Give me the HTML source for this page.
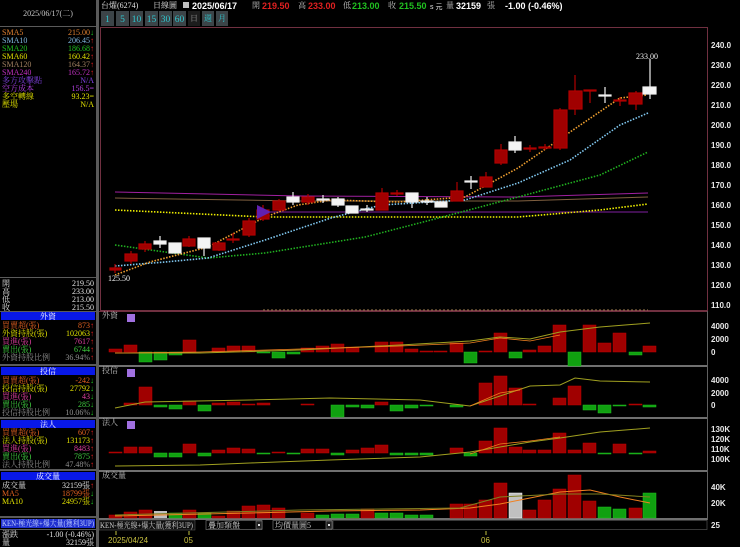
<!DOCTYPE html>
<html><head><meta charset="utf-8"><style>
html,body{margin:0;padding:0;background:#000;width:740px;height:547px;overflow:hidden}
svg{display:block}
text{font-family:"Liberation Sans","Noto Sans CJK TC",sans-serif;font-size:8px}
.s{font-family:"Liberation Serif","Noto Serif CJK SC",serif;font-size:8px}
.b{font-family:"Liberation Serif","Noto Serif CJK SC",serif;font-size:9.5px}
.ax{fill:#e8e8e8;font-size:8px;font-weight:bold}
</style></head><body>
<svg width="740" height="547" viewBox="0 0 740 547" xmlns="http://www.w3.org/2000/svg">
<rect width="740" height="547" fill="#000"/>
<rect x="96" y="0" width="3" height="547" fill="#5a5a5a"/>
<rect x="0" y="26" width="96" height="1" fill="#5a5a5a"/>
<rect x="0" y="277" width="96" height="1" fill="#5a5a5a"/>
<text x="48" y="16" class="s" fill="#c8c8c8" text-anchor="middle">2025/06/17(二)</text>
<text x="2" y="35" fill="#e08030" class="s">SMA5</text><text x="94" y="35" fill="#e08030" class="s" text-anchor="end">215.00<tspan fill="#20c020">↓</tspan></text>
<text x="2" y="43" fill="#80b8e0" class="s">SMA10</text><text x="94" y="43" fill="#80b8e0" class="s" text-anchor="end">206.45<tspan fill="#e02020">↑</tspan></text>
<text x="2" y="51" fill="#20c020" class="s">SMA20</text><text x="94" y="51" fill="#20c020" class="s" text-anchor="end">186.68<tspan fill="#e02020">↑</tspan></text>
<text x="2" y="59" fill="#e0e000" class="s">SMA60</text><text x="94" y="59" fill="#e0e000" class="s" text-anchor="end">160.42<tspan fill="#e02020">↑</tspan></text>
<text x="2" y="67" fill="#a08060" class="s">SMA120</text><text x="94" y="67" fill="#a08060" class="s" text-anchor="end">164.37<tspan fill="#e02020">↑</tspan></text>
<text x="2" y="75" fill="#c030c0" class="s">SMA240</text><text x="94" y="75" fill="#c030c0" class="s" text-anchor="end">165.72<tspan fill="#e02020">↑</tspan></text>
<text x="2" y="83" fill="#8040e0" class="s">多方攻擊點</text><text x="94" y="83" fill="#8040e0" class="s" text-anchor="end">N/A</text>
<text x="2" y="91" fill="#b040e0" class="s">空方成本</text><text x="94" y="91" fill="#b040e0" class="s" text-anchor="end">156.5=</text>
<text x="2" y="99" fill="#e0e000" class="s">多空轉線</text><text x="94" y="99" fill="#e0e000" class="s" text-anchor="end">93.23=</text>
<text x="2" y="107" fill="#e0e000" class="s">壓場</text><text x="94" y="107" fill="#e0e000" class="s" text-anchor="end">N/A</text>
<text x="2" y="286" class="s" fill="#e0e0e0">開</text><text x="94" y="286" class="s" fill="#e0e0e0" text-anchor="end">219.50</text>
<text x="2" y="294" class="s" fill="#e0e0e0">高</text><text x="94" y="294" class="s" fill="#e0e0e0" text-anchor="end">233.00</text>
<text x="2" y="302" class="s" fill="#e0e0e0">低</text><text x="94" y="302" class="s" fill="#e0e0e0" text-anchor="end">213.00</text>
<text x="2" y="310" class="s" fill="#e0e0e0">收</text><text x="94" y="310" class="s" fill="#e0e0e0" text-anchor="end">215.50</text>
<rect x="0" y="311" width="96" height="1" fill="#5a5a5a"/>
<rect x="1" y="312" width="94" height="8" fill="#0818e8"/>
<text x="48" y="319" class="s" fill="#fff" text-anchor="middle">外資</text>
<text x="2" y="328" class="s" fill="#e06020">買賣超(張)</text><text x="94" y="328" class="s" fill="#e06020" text-anchor="end">873<tspan fill="#e02020">↑</tspan></text>
<text x="2" y="336" class="s" fill="#e0e000">外資持股(張)</text><text x="94" y="336" class="s" fill="#e0e000" text-anchor="end">102063<tspan fill="#e02020">↑</tspan></text>
<text x="2" y="344" class="s" fill="#e040a0">買進(張)</text><text x="94" y="344" class="s" fill="#e040a0" text-anchor="end">7617<tspan fill="#e02020">↑</tspan></text>
<text x="2" y="352" class="s" fill="#40d040">賣出(張)</text><text x="94" y="352" class="s" fill="#40d040" text-anchor="end">6744<tspan fill="#e02020">↑</tspan></text>
<text x="2" y="360" class="s" fill="#909090">外資持股比例</text><text x="94" y="360" class="s" fill="#909090" text-anchor="end">36.94%<tspan fill="#e02020">↑</tspan></text>
<rect x="0" y="364" width="96" height="2" fill="#5a5a5a"/>
<rect x="1" y="367" width="94" height="8" fill="#0818e8"/>
<text x="48" y="374" class="s" fill="#fff" text-anchor="middle">投信</text>
<text x="2" y="383" class="s" fill="#e06020">買賣超(張)</text><text x="94" y="383" class="s" fill="#e06020" text-anchor="end">-242<tspan fill="#20c020">↓</tspan></text>
<text x="2" y="391" class="s" fill="#e0e000">投信持股(張)</text><text x="94" y="391" class="s" fill="#e0e000" text-anchor="end">27792<tspan fill="#20c020">↓</tspan></text>
<text x="2" y="399" class="s" fill="#e040a0">買進(張)</text><text x="94" y="399" class="s" fill="#e040a0" text-anchor="end">43<tspan fill="#20c020">↓</tspan></text>
<text x="2" y="407" class="s" fill="#40d040">賣出(張)</text><text x="94" y="407" class="s" fill="#40d040" text-anchor="end">285<tspan fill="#20c020">↓</tspan></text>
<text x="2" y="415" class="s" fill="#909090">投信持股比例</text><text x="94" y="415" class="s" fill="#909090" text-anchor="end">10.06%<tspan fill="#20c020">↓</tspan></text>
<rect x="0" y="417" width="96" height="2" fill="#5a5a5a"/>
<rect x="1" y="420" width="94" height="8" fill="#0818e8"/>
<text x="48" y="427" class="s" fill="#fff" text-anchor="middle">法人</text>
<text x="2" y="435" class="s" fill="#e06020">買賣超(張)</text><text x="94" y="435" class="s" fill="#e06020" text-anchor="end">607<tspan fill="#e02020">↑</tspan></text>
<text x="2" y="443" class="s" fill="#e0e000">法人持股(張)</text><text x="94" y="443" class="s" fill="#e0e000" text-anchor="end">131173<tspan fill="#e02020">↑</tspan></text>
<text x="2" y="451" class="s" fill="#e040a0">買進(張)</text><text x="94" y="451" class="s" fill="#e040a0" text-anchor="end">8483<tspan fill="#e02020">↑</tspan></text>
<text x="2" y="459" class="s" fill="#40d040">賣出(張)</text><text x="94" y="459" class="s" fill="#40d040" text-anchor="end">7875<tspan fill="#e02020">↑</tspan></text>
<text x="2" y="467" class="s" fill="#909090">法人持股比例</text><text x="94" y="467" class="s" fill="#909090" text-anchor="end">47.48%<tspan fill="#e02020">↑</tspan></text>
<rect x="0" y="469" width="96" height="2" fill="#5a5a5a"/>
<rect x="1" y="472" width="94" height="8" fill="#0818e8"/>
<text x="48" y="479" class="s" fill="#fff" text-anchor="middle">成交量</text>
<text x="2" y="488" class="s" fill="#e0e0e0">成交量</text><text x="94" y="488" class="s" fill="#e0e0e0" text-anchor="end">32159張<tspan fill="#e02020">↑</tspan></text>
<text x="2" y="496" class="s" fill="#e06020">MA5</text><text x="94" y="496" class="s" fill="#e06020" text-anchor="end">18799張<tspan fill="#20c020">↓</tspan></text>
<text x="2" y="504" class="s" fill="#e0e000">MA10</text><text x="94" y="504" class="s" fill="#e0e000" text-anchor="end">24957張<tspan fill="#20c020">↓</tspan></text>
<rect x="0" y="516" width="96" height="2" fill="#5a5a5a"/>
<rect x="1" y="519" width="94" height="9" fill="#2030d0"/>
<text x="2" y="526" class="s" fill="#c0d0ff" textLength="92" lengthAdjust="spacingAndGlyphs">KEN-極光線+爆大量(獲利3UP)</text>
<rect x="0" y="529" width="96" height="1" fill="#5a5a5a"/>
<text x="2" y="537" class="s" fill="#e0e0e0">漲跌</text><text x="94" y="537" class="s" fill="#e0e0e0" text-anchor="end">-1.00 (-0.46%)</text>
<text x="2" y="545" class="s" fill="#e0e0e0">量</text><text x="94" y="545" class="s" fill="#e0e0e0" text-anchor="end">32159張</text>

<text x="101" y="8" class="s" fill="#e0e0e0">台燿(6274)</text>
<text x="153" y="8" class="s" fill="#e0e0e0">日線圖</text>
<rect x="183" y="2" width="6" height="6" fill="#c0c0c0"/>
<text x="192" y="9" fill="#fff" font-weight="bold" style="font-size:9px">2025/06/17</text>
<text x="252" y="8" class="s" fill="#c0c0c0">開</text>
<text x="262" y="9" fill="#e02020" font-weight="bold" style="font-size:9px">219.50</text>
<text x="298" y="8" class="s" fill="#c0c0c0">高</text>
<text x="308" y="9" fill="#e02020" font-weight="bold" style="font-size:9px">233.00</text>
<text x="343" y="8" class="s" fill="#c0c0c0">低</text>
<text x="352" y="9" fill="#20c020" font-weight="bold" style="font-size:9px">213.00</text>
<text x="388" y="8" class="s" fill="#c0c0c0">收</text>
<text x="399" y="9" fill="#20c020" font-weight="bold" style="font-size:9px">215.50</text>
<text x="430" y="9" fill="#e0e0e0" style="font-size:7px">s 元</text>
<text x="446" y="8" class="s" fill="#c0c0c0">量</text>
<text x="456" y="9" fill="#fff" font-weight="bold" style="font-size:9px">32159</text>
<text x="487" y="8" class="s" fill="#c0c0c0">張</text>
<text x="505" y="9" fill="#fff" font-weight="bold" style="font-size:9px">-1.00 (-0.46%)</text>
<rect x="101" y="11" width="13" height="15" fill="#3c4448"/><text x="107.5" y="22" fill="#30c8d0" text-anchor="middle" class="b">1</text>
<rect x="116" y="11" width="13" height="15" fill="#3c4448"/><text x="122.5" y="22" fill="#30c8d0" text-anchor="middle" class="b">5</text>
<rect x="130" y="11" width="13" height="15" fill="#3c4448"/><text x="136.5" y="22" fill="#30c8d0" text-anchor="middle" class="b">10</text>
<rect x="145" y="11" width="13" height="15" fill="#3c4448"/><text x="151.5" y="22" fill="#30c8d0" text-anchor="middle" class="b">15</text>
<rect x="159" y="11" width="13" height="15" fill="#3c4448"/><text x="165.5" y="22" fill="#30c8d0" text-anchor="middle" class="b">30</text>
<rect x="173" y="11" width="13" height="15" fill="#3c4448"/><text x="179.5" y="22" fill="#30c8d0" text-anchor="middle" class="b">60</text>
<rect x="188" y="11" width="12" height="15" fill="#1c1c1c"/><text x="194" y="21" fill="#909090" text-anchor="middle" class="s">日</text>
<rect x="202" y="11" width="12" height="15" fill="#3c4448"/><text x="208" y="21" fill="#30c8d0" text-anchor="middle" class="s">週</text>
<rect x="216" y="11" width="12" height="15" fill="#3c4448"/><text x="222" y="21" fill="#30c8d0" text-anchor="middle" class="s">月</text>
<rect x="100.5" y="27.5" width="607" height="283" fill="none" stroke="#703040" stroke-width="1"/>
<text x="711" y="48" class="ax">240.0</text><text x="711" y="68" class="ax">230.0</text><text x="711" y="88" class="ax">220.0</text><text x="711" y="108" class="ax">210.0</text><text x="711" y="128" class="ax">200.0</text><text x="711" y="148" class="ax">190.0</text><text x="711" y="168" class="ax">180.0</text><text x="711" y="188" class="ax">170.0</text><text x="711" y="208" class="ax">160.0</text><text x="711" y="228" class="ax">150.0</text><text x="711" y="248" class="ax">140.0</text><text x="711" y="268" class="ax">130.0</text><text x="711" y="288" class="ax">120.0</text><text x="711" y="308" class="ax">110.0</text>
<text x="711" y="329" class="ax">4000</text><text x="711" y="342" class="ax">2000</text><text x="711" y="355" class="ax">0</text>
<text x="711" y="383" class="ax">4000</text><text x="711" y="396" class="ax">2000</text><text x="711" y="408" class="ax">0</text>
<text x="711" y="432" class="ax">130K</text><text x="711" y="442" class="ax">120K</text><text x="711" y="452" class="ax">110K</text><text x="711" y="462" class="ax">100K</text>
<text x="711" y="490" class="ax">40K</text><text x="711" y="506" class="ax">20K</text><text x="711" y="528" class="ax">25</text>
<polyline points="115,192 300,196 518,197 648,193" fill="none" stroke="#a020a0" stroke-width="1"/>
<polyline points="115,198 300,201 518,201 648,197" fill="none" stroke="#806040" stroke-width="1"/>
<polyline points="263,212 648,212" fill="none" stroke="#8020a0" stroke-width="1"/>
<polyline points="115,210 265,217 518,217 600,210 648,204" fill="none" stroke="#f0f000" stroke-width="1.6" stroke-dasharray="1.5,1.5"/>
<polyline points="115,245 208,258 265,253 365,237 431,220 518,197 600,175 648,152" fill="none" stroke="#20b020" stroke-width="1.6" stroke-dasharray="1.5,1.5"/>
<polyline points="115,266 165,262 208,258 265,240 331,218 381,205 465,200 518,183 570,160 620,125 648,113" fill="none" stroke="#80c8f0" stroke-width="1.6" stroke-dasharray="1.5,1.5"/>
<polyline points="115,275 150,262 208,247 265,217 298,205 331,200 398,202 465,197 518,168 573,130 620,98 647,95" fill="none" stroke="#f0a030" stroke-width="1.6" stroke-dasharray="1.5,1.5"/>
<polyline points="263,310 648,310" fill="none" stroke="#a08050" stroke-width="1" stroke-dasharray="2,2"/>
<g stroke-width="1.2">
<g stroke="#b00000" fill="#a00000">
<line x1="115" y1="264" x2="115" y2="273"/><rect x="110" y="268" width="11" height="2"/>
<line x1="131" y1="251" x2="131" y2="264"/><rect x="125" y="254" width="12" height="7"/>
<line x1="145" y1="241" x2="145" y2="252"/><rect x="139" y="244" width="12" height="5"/>
<line x1="189" y1="236" x2="189" y2="247"/><rect x="183" y="239" width="12" height="7"/>
<line x1="219" y1="241" x2="219" y2="251"/><rect x="213" y="243" width="12" height="7"/>
<line x1="233" y1="233" x2="233" y2="243"/><rect x="227" y="239" width="12" height="1"/>
<line x1="249" y1="218" x2="249" y2="237"/><rect x="243" y="221" width="12" height="14"/>
<line x1="263" y1="205" x2="263" y2="221"/><rect x="257" y="210" width="12" height="9"/>
<line x1="279" y1="199" x2="279" y2="211"/><rect x="273" y="201" width="12" height="9"/>
<line x1="308" y1="194" x2="308" y2="205"/><rect x="302" y="197" width="12" height="5"/>
<line x1="382" y1="188" x2="382" y2="210"/><rect x="376" y="193" width="12" height="17"/>
<line x1="397" y1="190" x2="397" y2="196"/><rect x="391" y="193" width="12" height="1"/>
<line x1="457" y1="182" x2="457" y2="201"/><rect x="451" y="191" width="12" height="10"/>
<line x1="486" y1="172" x2="486" y2="187"/><rect x="480" y="177" width="12" height="10"/>
<line x1="501" y1="144" x2="501" y2="165"/><rect x="495" y="150" width="12" height="13"/>
<line x1="530" y1="145" x2="530" y2="152"/><rect x="524" y="148" width="12" height="1"/>
<line x1="545" y1="144" x2="545" y2="150"/><rect x="539" y="147" width="12" height="1"/>
<line x1="560" y1="108" x2="560" y2="150"/><rect x="554" y="110" width="13" height="38"/>
<line x1="575" y1="75" x2="575" y2="115"/><rect x="569" y="91" width="13" height="18"/>
<line x1="590" y1="90" x2="590" y2="103"/><rect x="584" y="90" width="12" height="1"/>
<line x1="620" y1="97" x2="620" y2="106"/><rect x="614" y="100" width="12" height="1"/>
<line x1="636" y1="91" x2="636" y2="110"/><rect x="629" y="93" width="13" height="11"/>
</g>
<g stroke="#f0f0f0" fill="#f4f4f4">
<line x1="160" y1="236" x2="160" y2="248"/><rect x="154" y="241" width="12" height="3"/>
<line x1="175" y1="243" x2="175" y2="253"/><rect x="169" y="243" width="12" height="10"/>
<line x1="204" y1="238" x2="204" y2="256"/><rect x="198" y="238" width="12" height="10"/>
<line x1="293" y1="192" x2="293" y2="205"/><rect x="287" y="197" width="12" height="5"/>
<line x1="323" y1="195" x2="323" y2="203"/><rect x="317" y="199" width="12" height="1"/>
<line x1="338" y1="197" x2="338" y2="207"/><rect x="332" y="199" width="12" height="6"/>
<rect x="346" y="206" width="12" height="7"/>
<line x1="367" y1="205" x2="367" y2="212"/><rect x="361" y="209" width="12" height="1"/>
<line x1="412" y1="193" x2="412" y2="208"/><rect x="406" y="193" width="12" height="9"/>
<line x1="427" y1="197" x2="427" y2="205"/><rect x="421" y="201" width="12" height="1"/>
<rect x="435" y="202" width="12" height="5"/>
<line x1="471" y1="176" x2="471" y2="189"/><rect x="465" y="181" width="12" height="1"/>
<line x1="515" y1="136" x2="515" y2="153"/><rect x="509" y="142" width="12" height="8"/>
<line x1="605" y1="87" x2="605" y2="103"/><rect x="599" y="95" width="12" height="1"/>
<line x1="650" y1="59" x2="650" y2="99"/><rect x="643" y="87" width="13" height="7"/>
</g>
</g>
<polygon points="257,205 271,212 257,219" fill="#6020b0"/>
<text x="108" y="281" class="s" fill="#f0f0f0">125.50</text>
<text x="636" y="59" class="s" fill="#f0f0f0">233.00</text>
<rect x="99" y="311" width="609" height="1" fill="#703040"/>
<rect x="99" y="365" width="609" height="2" fill="#707070"/>
<rect x="99" y="417" width="609" height="2" fill="#707070"/>
<rect x="99" y="470" width="609" height="2" fill="#707070"/>
<rect x="99" y="518" width="609" height="2" fill="#707070"/>
<rect x="707" y="311" width="1" height="220" fill="#606060"/>
<text x="102" y="318" class="s" fill="#c0c0c0">外資</text><rect x="127" y="314" width="8" height="8" fill="#a070e0"/>
<text x="102" y="373" class="s" fill="#c0c0c0">投信</text><rect x="127" y="369" width="8" height="8" fill="#a070e0"/>
<text x="102" y="425" class="s" fill="#c0c0c0">法人</text><rect x="127" y="421" width="8" height="8" fill="#a070e0"/>
<text x="102" y="478" class="s" fill="#c0c0c0">成交量</text>
<g fill="#a00000" stroke="#c00000" stroke-width="0.5">
<rect x="109" y="349" width="13" height="3"/><rect x="124" y="345" width="13" height="7"/><rect x="183" y="340" width="13" height="12"/><rect x="212" y="348" width="13" height="4"/><rect x="227" y="346" width="13" height="6"/><rect x="242" y="346" width="13" height="6"/><rect x="301" y="348" width="13" height="4"/><rect x="316" y="346" width="13" height="6"/><rect x="331" y="344" width="13" height="8"/><rect x="346" y="347" width="13" height="5"/><rect x="375" y="342" width="13" height="10"/><rect x="390" y="342" width="13" height="10"/><rect x="405" y="349" width="13" height="3"/><rect x="420" y="351" width="13" height="1"/><rect x="434" y="351" width="13" height="1"/><rect x="450" y="343" width="13" height="9"/><rect x="479" y="351" width="13" height="1"/><rect x="494" y="333" width="13" height="19"/><rect x="523" y="350" width="13" height="2"/><rect x="538" y="346" width="13" height="6"/><rect x="553" y="325" width="13" height="27"/><rect x="583" y="325" width="13" height="27"/><rect x="598" y="343" width="13" height="9"/><rect x="613" y="333" width="13" height="19"/><rect x="643" y="346" width="13" height="6"/>
</g>
<g fill="#10a010" stroke="#20c020" stroke-width="0.5">
<rect x="139" y="352" width="13" height="10"/><rect x="154" y="352" width="13" height="8"/><rect x="169" y="352" width="13" height="3"/><rect x="257" y="352" width="13" height="1"/><rect x="272" y="352" width="13" height="6"/><rect x="287" y="352" width="13" height="2"/><rect x="464" y="352" width="13" height="11"/><rect x="509" y="352" width="13" height="6"/><rect x="568" y="352" width="13" height="14"/><rect x="629" y="352" width="13" height="3"/>
</g>
<polyline points="115,353 200,353 300,350 400,345 470,341 500,337 530,339 560,332 600,327 650,323" fill="none" stroke="#a0a020" stroke-width="1"/>
<polyline points="115,353 200,352 300,349 400,346 470,343 500,338 530,341 560,335" fill="none" stroke="#f08020" stroke-width="0.8"/>
<g fill="#a00000" stroke="#c00000" stroke-width="0.5">
<rect x="124" y="403" width="13" height="2"/><rect x="139" y="387" width="13" height="18"/><rect x="183" y="401" width="13" height="4"/><rect x="212" y="403" width="13" height="2"/><rect x="227" y="402" width="13" height="3"/><rect x="242" y="404" width="13" height="1"/><rect x="257" y="403" width="13" height="2"/><rect x="301" y="404" width="13" height="1"/><rect x="375" y="402" width="13" height="3"/><rect x="479" y="383" width="13" height="22"/><rect x="494" y="376" width="13" height="29"/><rect x="509" y="388" width="13" height="17"/><rect x="523" y="404" width="13" height="1"/><rect x="553" y="398" width="13" height="7"/><rect x="568" y="386" width="13" height="19"/><rect x="629" y="404" width="13" height="1"/>
</g>
<g fill="#10a010" stroke="#20c020" stroke-width="0.5">
<rect x="154" y="405" width="13" height="2"/><rect x="169" y="405" width="13" height="4"/><rect x="198" y="405" width="13" height="6"/><rect x="331" y="405" width="13" height="12"/><rect x="346" y="405" width="13" height="2"/><rect x="361" y="405" width="13" height="3"/><rect x="390" y="405" width="13" height="6"/><rect x="405" y="405" width="13" height="3"/><rect x="420" y="405" width="13" height="1"/><rect x="450" y="405" width="13" height="2"/><rect x="583" y="405" width="13" height="5"/><rect x="598" y="405" width="13" height="8"/><rect x="613" y="405" width="13" height="1"/><rect x="643" y="405" width="13" height="2"/>
</g>
<polyline points="115,408 145,402 250,400 330,398 420,400 470,406 500,396 530,386 560,385 575,378 600,381 650,382" fill="none" stroke="#a0a020" stroke-width="1"/>
<polyline points="470,406 500,393 520,390" fill="none" stroke="#f08020" stroke-width="0.8"/>
<g fill="#a00000" stroke="#c00000" stroke-width="0.5">
<rect x="109" y="452" width="13" height="1"/><rect x="124" y="447" width="13" height="6"/><rect x="139" y="447" width="13" height="6"/><rect x="183" y="444" width="13" height="9"/><rect x="212" y="450" width="13" height="3"/><rect x="227" y="448" width="13" height="5"/><rect x="242" y="449" width="13" height="4"/><rect x="272" y="452" width="13" height="1"/><rect x="301" y="449" width="13" height="4"/><rect x="316" y="449" width="13" height="4"/><rect x="346" y="450" width="13" height="3"/><rect x="361" y="448" width="13" height="5"/><rect x="375" y="445" width="13" height="8"/><rect x="450" y="448" width="13" height="5"/><rect x="479" y="441" width="13" height="12"/><rect x="494" y="428" width="13" height="25"/><rect x="509" y="447" width="13" height="6"/><rect x="523" y="450" width="13" height="3"/><rect x="538" y="450" width="13" height="3"/><rect x="553" y="433" width="13" height="20"/><rect x="568" y="450" width="13" height="3"/><rect x="583" y="443" width="13" height="10"/><rect x="613" y="444" width="13" height="9"/><rect x="643" y="451" width="13" height="2"/>
</g>
<g fill="#10a010" stroke="#20c020" stroke-width="0.5">
<rect x="154" y="453" width="13" height="4"/><rect x="169" y="453" width="13" height="4"/><rect x="198" y="453" width="13" height="3"/><rect x="257" y="453" width="13" height="1"/><rect x="287" y="453" width="13" height="1"/><rect x="331" y="453" width="13" height="2"/><rect x="390" y="453" width="13" height="2"/><rect x="405" y="453" width="13" height="2"/><rect x="420" y="453" width="13" height="2"/><rect x="464" y="453" width="13" height="3"/><rect x="598" y="453" width="13" height="1"/><rect x="629" y="453" width="13" height="1"/>
</g>
<polyline points="115,466 200,465 250,463 330,460 420,457 470,452 530,442 560,438 600,432 650,428" fill="none" stroke="#a0a020" stroke-width="1"/>
<polyline points="470,454 500,444 530,441 560,437" fill="none" stroke="#f08020" stroke-width="0.8"/>
<g fill="#a00000" stroke="#c00000" stroke-width="0.5">
<rect x="109" y="515" width="13" height="3"/><rect x="124" y="512" width="13" height="6"/><rect x="139" y="510" width="13" height="8"/><rect x="183" y="510" width="13" height="8"/><rect x="212" y="516" width="13" height="2"/><rect x="227" y="511" width="13" height="7"/><rect x="242" y="506" width="13" height="12"/><rect x="257" y="505" width="13" height="13"/><rect x="272" y="508" width="13" height="10"/><rect x="301" y="513" width="13" height="5"/><rect x="346" y="515" width="13" height="3"/><rect x="361" y="509" width="13" height="9"/><rect x="450" y="504" width="13" height="14"/><rect x="464" y="504" width="13" height="14"/><rect x="479" y="500" width="13" height="18"/><rect x="494" y="483" width="13" height="35"/><rect x="523" y="510" width="13" height="8"/><rect x="538" y="500" width="13" height="18"/><rect x="553" y="489" width="13" height="29"/><rect x="568" y="475" width="13" height="43"/><rect x="583" y="501" width="13" height="17"/><rect x="629" y="508" width="13" height="10"/>
</g>
<g fill="#10a010" stroke="#20c020" stroke-width="0.5">
<rect x="169" y="513" width="13" height="5"/><rect x="198" y="513" width="13" height="5"/><rect x="316" y="515" width="13" height="3"/><rect x="331" y="514" width="13" height="4"/><rect x="346" y="514" width="13" height="4"/><rect x="375" y="513" width="13" height="5"/><rect x="390" y="513" width="13" height="5"/><rect x="405" y="515" width="13" height="3"/><rect x="420" y="515" width="13" height="3"/><rect x="598" y="507" width="13" height="11"/><rect x="613" y="509" width="13" height="9"/><rect x="643" y="493" width="13" height="25"/>
</g>
<rect x="154" y="511" width="13" height="7" fill="#c0c0c0"/>
<rect x="509" y="493" width="13" height="25" fill="#c0c0c0" stroke="#fff" stroke-width="0.5"/>
<polyline points="115,516 250,513 330,511 420,510 470,508 500,504 530,498 560,492 590,490 620,497 650,503" fill="none" stroke="#f08020" stroke-width="1"/>
<polyline points="115,515 300,510 460,508 500,497 560,494 600,494 650,497" fill="none" stroke="#808020" stroke-width="1"/>
<rect x="99" y="520" width="609" height="11" fill="#000"/>
<rect x="99" y="520" width="96" height="10" fill="#101010" stroke="#606060" stroke-width="0.5"/>
<text x="100" y="528" class="s" fill="#d0d0d0" textLength="93" lengthAdjust="spacingAndGlyphs">KEN-極光線+爆大量(獲利3UP)</text>
<rect x="206" y="520.5" width="56" height="9" fill="#000" stroke="#707070" stroke-width="0.7"/>
<text x="208" y="528" class="s" fill="#d0d0d0">疊加類盤</text>
<rect x="256" y="521" width="6" height="8" fill="#202020" stroke="#909090" stroke-width="0.5"/><rect x="258" y="524" width="2" height="2" fill="#ddd"/>
<rect x="273" y="520.5" width="59" height="9" fill="#000" stroke="#707070" stroke-width="0.7"/>
<text x="275" y="528" class="s" fill="#d0d0d0">均價量圖5</text>
<rect x="326" y="521" width="6" height="8" fill="#202020" stroke="#909090" stroke-width="0.5"/><rect x="328" y="524" width="2" height="2" fill="#ddd"/>
<rect x="333" y="520.5" width="374" height="9" fill="none" stroke="#505050" stroke-width="0.7"/>
<line x1="116" y1="531" x2="116" y2="535" stroke="#c0c040"/>
<line x1="189" y1="531" x2="189" y2="535" stroke="#c0c040"/>
<line x1="486" y1="531" x2="486" y2="535" stroke="#c0c040"/>
<text x="108" y="543" fill="#c8c040" style="font-size:8px">2025/04/24</text>
<text x="184" y="543" fill="#c8c040" style="font-size:8px">05</text>
<text x="481" y="543" fill="#c8c040" style="font-size:8px">06</text>
</svg>
</body></html>
